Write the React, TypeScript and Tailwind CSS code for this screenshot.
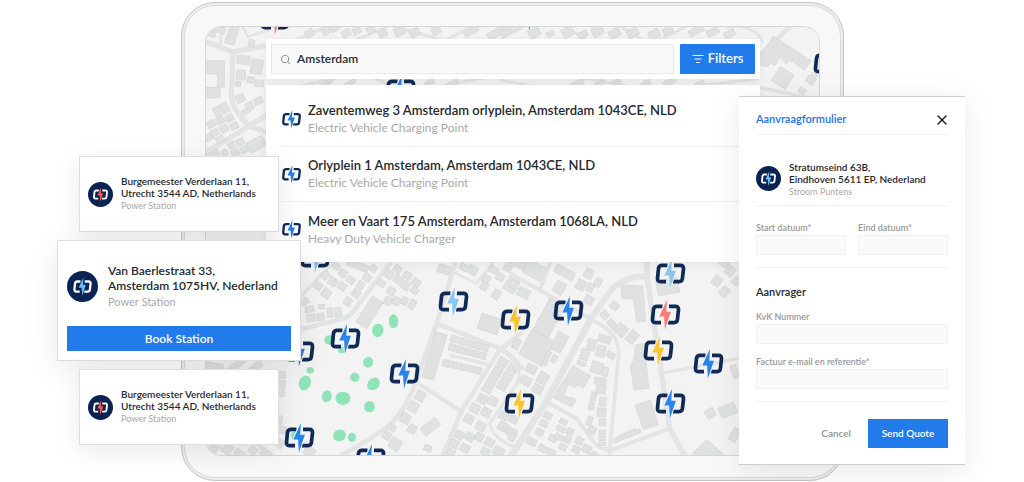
import { ListFilter, Search, X } from 'lucide-react';

const BLUE = '#2b84ea';
const SKY = '#8cc4ee';
const YELLOW = '#fac42f';
const RED = '#fa7a78';

type Block = [number, number, number, number, number];
type Road = [string, number];

interface Tile {
  transform: string;
  roads: Road[];
  blocks: Block[];
  shapes: string[];
}

// Blocks are [centre x, centre y, width, height, rotation].
const tiles: Tile[] = [
  {
    transform: 'translate(-35 -26) scale(0.3333)',
    roads: [
      ['M100 122 L190 155 L290 138', 16],
      ['M190 155 L186 290 Q188 330 240 378 L300 400', 16],
      ['M300 340 L240 378 L100 462', 16],
      ['M150 150 L160 70', 8],
      ['M215 70 L235 110 L300 90', 8],
      ['M380 120 L520 60 M560 120 L700 60 M640 70 L820 120 M830 120 L940 60', 9],
      ['M380 260 L520 230 M600 230 L700 270 M800 262 L960 230', 9],
    ],
    blocks: [
      [188, 105, 28, 58, 18], [150, 88, 34, 20, 20], [246, 130, 18, 22, 15], [128, 100, 20, 22, 15],
      [222, 180, 40, 26, 4], [262, 200, 34, 44, 10], [214, 225, 28, 30, 2], [244, 240, 22, 18, 5],
      [206, 252, 16, 14, 3], [270, 250, 26, 20, 5], [155, 330, 46, 30, -28], [180, 354, 24, 20, -28],
      [152, 362, 24, 20, -28], [125, 372, 24, 20, -28], [194, 378, 24, 20, -28], [164, 386, 24, 20, -28],
      [136, 398, 24, 20, -28], [118, 412, 24, 20, -28], [152, 418, 24, 20, -28], [212, 295, 26, 24, -28],
      [240, 318, 22, 24, -28], [266, 303, 26, 20, -28], [230, 334, 26, 14, -28], [262, 432, 52, 34, -28],
      [212, 426, 24, 20, -28], [186, 436, 20, 20, -28], [226, 448, 24, 20, -28], [198, 458, 24, 20, -28],
      [128, 466, 44, 20, -28], [166, 458, 18, 18, -28], [420, 100, 26, 22, -28], [470, 92, 26, 22, -28],
      [498, 84, 26, 18, -28], [530, 100, 26, 22, -28], [562, 92, 24, 20, -28], [604, 90, 24, 20, -28],
      [640, 100, 26, 22, -28], [690, 94, 30, 26, -28], [735, 98, 30, 24, -28], [800, 92, 26, 22, -28],
      [905, 94, 46, 18, -30], [985, 96, 66, 22, -30], [470, 250, 40, 12, -28], [540, 250, 40, 12, -28],
      [780, 248, 30, 14, -28], [850, 250, 34, 14, -28],
    ],
    shapes: ['107,182 165,182 165,262 152,262 152,292 107,296 107,262 144,262 144,222 107,222'],
  },
  {
    transform: 'translate(295 -26) scale(0.3333)',
    roads: [
      ['M778 170 L880 72', 14],
      ['M680 80 Q770 70 790 130', 9],
      ['M0 120 L110 60 M170 60 L260 120 M330 60 L430 120 M480 120 L600 60', 9],
      ['M0 240 L120 262 M200 262 L260 235 L400 262 M560 262 L780 236', 9],
      ['M778 262 L960 300', 10],
    ],
    blocks: [
      [32, 90, 60, 18, -28], [104, 98, 34, 28, -28], [152, 102, 22, 16, -28], [205, 96, 34, 28, -28],
      [250, 104, 30, 20, -28], [294, 94, 34, 28, -28], [345, 100, 34, 26, -28], [400, 98, 34, 26, -28],
      [464, 103, 34, 26, -28], [505, 92, 30, 20, -28], [590, 92, 46, 20, -28], [640, 96, 36, 20, -28],
      [690, 102, 34, 20, -28], [235, 252, 34, 20, -28], [300, 250, 30, 14, -28], [350, 246, 30, 14, -28],
      [440, 250, 26, 16, -28], [510, 246, 40, 16, -28], [600, 252, 30, 14, -28], [850, 234, 50, 50, 32],
      [934, 240, 26, 22, 32], [944, 226, 16, 14, 32], [908, 272, 20, 16, 32],
    ],
    shapes: ['822,108 935,182 915,210 872,180 860,192 854,184 840,170 828,196 812,190 806,200 780,196 780,168'],
  },
  {
    transform: 'translate(85 229) scale(0.3333)',
    roads: [
      ['M0 232 L165 190 Q182 184 192 168 L305 20', 14],
      ['M20 140 L135 18', 10],
      ['M500 18 L442 205 L375 390 Q335 500 250 545 L140 612', 14],
      ['M440 205 L630 280 Q670 300 700 345', 14],
      ['M700 230 L630 285 L515 470 L455 615', 14],
      ['M385 385 L515 468', 12],
      ['M480 300 L600 330', 10],
      ['M490 50 L560 85 L615 18', 8],
      ['M700 360 L600 505 Q610 555 690 582', 9],
    ],
    blocks: [
      [240, 172, 38, 92, 32], [600, 207, 62, 48, 18], [435, 303, 36, 142, 17], [494, 252, 20, 20, 15],
      [518, 259, 20, 20, 15], [541, 266, 20, 20, 15], [564, 272, 20, 20, 15], [587, 278, 20, 20, 15],
      [488, 277, 20, 20, 15], [511, 284, 20, 20, 15], [534, 290, 20, 20, 15], [557, 296, 20, 20, 15],
      [580, 302, 20, 20, 15], [470, 325, 20, 20, 15], [494, 330, 20, 20, 15], [518, 336, 20, 20, 15],
      [542, 341, 20, 20, 15], [566, 347, 20, 20, 15], [423, 515, 56, 28, -38], [415, 580, 22, 18, 20],
      [392, 423, 28, 30, 28], [372, 456, 28, 30, 28], [347, 490, 30, 28, 28], [368, 522, 24, 26, 30],
      [307, 518, 24, 20, 30], [292, 542, 24, 24, 30], [317, 567, 34, 34, 30], [97, 155, 18, 14, 0],
      [65, 189, 24, 22, -8], [93, 186, 22, 22, -8], [121, 173, 18, 28, -8], [146, 172, 20, 28, -10],
      [45, 140, 24, 20, -35], [60, 163, 26, 18, -10], [175, 140, 22, 24, 35], [200, 115, 24, 24, 35],
      [213, 90, 20, 22, 35], [233, 68, 24, 22, 35], [252, 40, 20, 20, 35], [85, 92, 26, 22, 35],
      [110, 115, 26, 26, 35], [108, 60, 24, 22, -35], [130, 80, 26, 24, 35], [158, 94, 24, 22, 35],
      [160, 55, 24, 22, 35], [184, 75, 24, 20, 35], [140, 34, 22, 18, 35], [205, 32, 66, 20, 20],
      [275, 85, 24, 20, 35], [295, 138, 22, 24, 25], [320, 138, 22, 24, 25], [345, 138, 18, 24, 25],
      [368, 148, 18, 30, 25], [305, 108, 24, 24, 35], [298, 58, 26, 24, 35], [324, 43, 24, 22, 35],
      [326, 74, 26, 24, 35], [348, 92, 24, 24, 35], [354, 62, 26, 22, 35], [380, 82, 24, 22, 35],
      [375, 106, 22, 20, 35], [454, 40, 18, 26, 20], [474, 46, 18, 26, 20], [522, 36, 24, 20, 30],
      [550, 46, 28, 26, 30], [590, 72, 22, 24, 30], [612, 45, 26, 20, 30], [632, 66, 24, 22, 30],
      [655, 38, 24, 22, 30], [584, 94, 22, 22, 30], [620, 118, 22, 28, 30], [666, 90, 36, 42, 30],
      [680, 266, 20, 30, 25], [640, 322, 28, 26, 28], [670, 340, 28, 26, 28], [624, 348, 28, 26, 28],
      [654, 366, 28, 26, 28], [609, 374, 28, 26, 28], [638, 392, 28, 26, 28], [594, 400, 28, 26, 28],
      [610, 438, 28, 26, 28], [578, 432, 28, 26, 28], [556, 460, 28, 26, 28], [590, 472, 28, 26, 28],
      [538, 492, 28, 26, 28], [574, 514, 28, 26, 28], [510, 540, 26, 24, 28], [541, 546, 26, 24, 28],
      [494, 566, 26, 24, 28], [526, 580, 26, 24, 28], [570, 546, 24, 24, 28], [484, 592, 24, 20, 28],
      [600, 562, 28, 24, 28], [588, 590, 26, 22, 28], [628, 590, 32, 26, 28], [640, 515, 28, 26, 28],
      [666, 532, 28, 24, 28], [642, 482, 26, 24, 28], [672, 492, 26, 24, 28], [60, 590, 30, 28, 35],
    ],
    shapes: [],
  },
  {
    transform: 'translate(305 229) scale(0.3333)',
    roads: [
      ['M0 55 L90 105 L125 18', 12],
      ['M90 105 L240 190', 12],
      ['M245 190 L110 440 L0 610', 20],
      ['M245 190 L300 112 Q340 62 412 64 L412 18', 18],
      ['M412 64 L455 350 L480 520 L530 610', 16],
      ['M455 355 L700 308', 10],
      ['M245 195 Q325 225 328 295 L300 590 L300 612', 11],
      ['M110 440 L200 490 L260 570 Q290 590 320 580 L480 520', 12],
      ['M0 320 Q45 335 20 385', 8],
    ],
    blocks: [
      [75, 46, 60, 44, 28], [42, 114, 36, 28, 28], [14, 90, 24, 24, 28], [165, 52, 62, 26, 28],
      [150, 98, 30, 36, 28], [214, 90, 26, 30, 28], [238, 56, 26, 28, 28], [242, 98, 20, 24, 28],
      [265, 82, 20, 26, 28], [238, 135, 26, 26, 28], [118, 190, 52, 108, 28], [82, 278, 78, 84, 28],
      [150, 262, 34, 56, 28], [116, 300, 14, 24, 28], [106, 322, 14, 20, 28], [134, 312, 14, 24, 28],
      [22, 268, 16, 28, 25], [65, 342, 30, 26, 28], [100, 370, 30, 34, 28], [50, 378, 30, 26, 28],
      [84, 402, 30, 26, 28], [285, 180, 24, 22, 45], [315, 152, 26, 22, 40], [308, 208, 20, 30, -40],
      [335, 225, 34, 34, 40], [368, 246, 28, 38, 40], [475, 95, 66, 44, -10], [622, 78, 26, 30, 35],
      [645, 110, 24, 30, 40], [662, 48, 26, 30, 40], [680, 78, 20, 24, 40], [645, 25, 26, 22, 35],
      [602, 475, 26, 28, 60], [655, 466, 50, 34, -22], [676, 350, 18, 40, -20], [676, 540, 24, 40, 30],
      [412, 480, 48, 78, -18], [285, 252, 38, 22, 18], [248, 260, 26, 14, 18], [244, 278, 26, 14, 18],
      [274, 288, 26, 34, 15], [228, 290, 26, 14, 18], [222, 308, 26, 14, 18], [216, 326, 26, 12, 18],
      [304, 300, 26, 18, 28], [262, 338, 34, 34, 18], [288, 350, 16, 28, 10], [272, 378, 34, 20, 5],
      [274, 404, 28, 26, 8], [252, 424, 16, 26, 10], [280, 440, 20, 26, 10], [246, 452, 16, 24, 10],
      [276, 472, 26, 26, 5], [240, 498, 16, 28, 20], [278, 502, 20, 22, 3], [278, 532, 20, 14, 0],
      [278, 550, 20, 14, 0], [278, 566, 20, 10, 0], [248, 525, 22, 22, 28], [115, 482, 24, 20, 28],
      [103, 506, 24, 20, 28], [90, 532, 24, 20, 28], [66, 560, 30, 20, 28], [98, 580, 24, 20, 28],
      [130, 550, 24, 20, 28], [124, 592, 26, 20, 28], [162, 500, 24, 16, 28], [154, 522, 26, 16, 28],
      [148, 546, 26, 16, 28], [182, 530, 20, 20, 28], [174, 554, 20, 20, 28], [160, 576, 24, 18, 28],
      [210, 558, 22, 22, 28], [200, 584, 22, 20, 28], [232, 582, 26, 22, 28], [256, 598, 20, 14, 28],
      [20, 20, 60, 26, 28], [8, 545, 20, 24, 28],
    ],
    shapes: [
      '190,332 243,362 222,400 205,390 195,398 178,388 162,420 172,424 180,428 192,428 200,436 188,456 130,428',
      '335,90 400,92 408,200 382,200 372,132 338,130',
      '378,270 404,265 418,400 374,406 362,330 372,320',
      '550,594 592,554 645,600 645,612 550,612',
      '310,552 375,520 382,525 390,520 396,532 316,564',
    ],
  },
  {
    transform: 'translate(-155 284) scale(0.3333)',
    roads: [['M465 380 L560 450 M620 400 L700 460', 12]],
    blocks: [
      [495, 172, 50, 26, 10], [560, 166, 60, 20, -40], [620, 170, 40, 20, -40], [694, 195, 26, 22, 0],
      [694, 222, 26, 22, 0], [692, 248, 26, 22, 0], [690, 330, 16, 26, 8], [700, 360, 20, 22, 8],
      [488, 420, 26, 26, 40], [535, 416, 26, 30, 40], [570, 430, 30, 22, 40], [610, 422, 24, 24, 40],
      [648, 430, 30, 24, 40], [690, 400, 26, 24, 40],
    ],
    shapes: [],
  },
];

// [centre x, centre y, radius x, radius y, rotation]
const trees: Block[] = [
  [265, 226, 17, 20, 15], [312, 199, 14, 21, 0], [236, 322, 15, 16, 20], [196, 367, 14, 14, 0],
  [252, 387, 21, 17, -45], [62, 346, 11, 10, 0], [46, 384, 18, 22, 20], [112, 424, 15, 18, 15],
  [160, 430, 22, 20, 0], [240, 455, 16, 17, 0], [150, 541, 20, 17, -20], [187, 547, 12, 14, 0],
  [120, 255, 16, 14, 0], [157, 285, 11, 10, 0], [16, 541, 12, 13, 0],
];

const pins: [number, number, string][] = [
  [71, -6, RED], [196, 64, BLUE], [325, -10, BLUE], [624, 38, BLUE], [111, 232, SKY],
  [249, 276, SKY], [141, 313, BLUE], [95, 326, BLUE], [200, 348, BLUE], [95, 412, BLUE],
  [166, 433, BLUE], [311, 294, YELLOW], [364, 285, BLUE], [466, 248, SKY], [461, 289, RED],
  [454, 325, YELLOW], [504, 338, BLUE], [466, 378, BLUE], [315, 378, YELLOW],
];

const stations = [
  { name: 'Zaventemweg 3 Amsterdam orlyplein, Amsterdam 1043CE, NLD', type: 'Electric Vehicle Charging Point' },
  { name: 'Orlyplein 1 Amsterdam, Amsterdam 1043CE, NLD', type: 'Electric Vehicle Charging Point' },
  { name: 'Meer en Vaart 175 Amsterdam, Amsterdam 1068LA, NLD', type: 'Heavy Duty Vehicle Charger' },
];

function Mark({ bolt, bracket = '#0f2a54', halo }: { bolt: string; bracket?: string; halo: string }) {
  return (
    <>
      <path
        d="M12 6.4H6.6Q3.5 6.4 3 9.4L2 19.3Q1.7 22.6 4.9 22.6H10.5M18.5 6.4H24.8Q28.3 6.4 28 9.8L26.9 19.6Q26.5 22.6 23.4 22.6H17.5"
        fill="none"
        stroke={bracket}
        strokeWidth="3.7"
      />
      <path
        d="M16.4 0L8.8 16.4H13.6L14.4 29.4L20.4 11.8H15.8Z"
        fill={bolt}
        stroke={halo}
        strokeWidth="2"
        paintOrder="stroke"
      />
    </>
  );
}

function RoundMark({ bolt, className }: { bolt: string; className: string }) {
  return (
    <svg viewBox="0 0 50 50" className={`shrink-0 ${className}`} aria-hidden="true">
      <circle cx="25" cy="25" r="25" fill="#0a2353" />
      <g transform="translate(10 10.5)">
        <Mark bolt={bolt} bracket="#ffffff" halo="#0a2353" />
      </g>
    </svg>
  );
}

function CityMap() {
  return (
    <svg
      viewBox="1 1 614 428"
      preserveAspectRatio="xMidYMid slice"
      className="absolute inset-0 h-full w-full"
      aria-hidden="true"
    >
      <rect width="616" height="430" fill="#f3f3f3" />
      {tiles.map((tile) => (
        <g key={tile.transform} transform={tile.transform}>
          {tile.roads.map(([d, width]) => (
            <path key={d} d={d} fill="none" stroke="#e3e4e4" strokeWidth={width} strokeLinejoin="round" />
          ))}
          <g fill="#e0e1e1" stroke="#cfd0d0" strokeWidth="1.5">
            {tile.blocks.map(([x, y, w, h, r], i) => (
              <rect key={i} x={x - w / 2} y={y - h / 2} width={w} height={h} transform={`rotate(${r} ${x} ${y})`} />
            ))}
            {tile.shapes.map((points) => (
              <polygon key={points} points={points} />
            ))}
          </g>
        </g>
      ))}
      <g transform="translate(85 229) scale(0.3333)" fill="#8fe3b8">
        {trees.map(([x, y, rx, ry, r], i) => (
          <ellipse key={i} cx={x} cy={y} rx={rx} ry={ry} transform={`rotate(${r} ${x} ${y})`} />
        ))}
      </g>
      {pins.map(([x, y, color]) => (
        <g key={`${x}-${y}`} transform={`translate(${x - 15} ${y - 15})`}>
          <Mark bolt={color} halo="#f3f3f3" />
        </g>
      ))}
    </svg>
  );
}

function SmallCard() {
  return (
    <article className="flex h-[76px] w-[200px] items-center gap-2 border border-[#dedede] bg-white px-2 shadow-[0_6px_24px_rgba(0,0,0,0.09)]">
      <RoundMark bolt="#fb5a55" className="size-[25px]" />
      <div className="whitespace-nowrap">
        <h3 className="text-[10px] leading-3 font-semibold text-[#26282c]">
          Burgemeester Verderlaan 11,
          <br />
          Utrecht 3544 AD, Netherlands
        </h3>
        <p className="text-[9px] leading-[14px] text-[#a9a9a9]">Power Station</p>
      </div>
    </article>
  );
}

function BookingCard() {
  return (
    <article className="w-full border border-[#dedede] bg-white px-[9px] pt-[22px] pb-[9px] shadow-[0_8px_30px_rgba(0,0,0,0.09)]">
      <div className="flex items-center gap-[10px]">
        <RoundMark bolt="#69bdf7" className="size-[31px]" />
        <div className="whitespace-nowrap">
          <h3 className="text-xs leading-[15px] font-semibold text-[#26282c]">
            Van Baerlestraat 33,
            <br />
            Amsterdam 1075HV, Nederland
          </h3>
          <p className="text-[11px] leading-[17px] text-[#a9a9a9]">Power Station</p>
        </div>
      </div>
      <button type="button" className="mt-4 h-[25px] w-full bg-[#217bea] text-xs font-semibold text-white">
        Book Station
      </button>
    </article>
  );
}

function Field({ id, label }: { id: string; label: string }) {
  return (
    <div className="min-w-0 flex-1">
      <label htmlFor={id} className="block pb-px text-[9px] leading-3 font-semibold text-[#989898]">
        {label}
      </label>
      <input id={id} type="text" className="block h-5 w-full border border-[#f1f1f1] bg-[#fafafa] px-1 text-[9px]" />
    </div>
  );
}

function QuoteForm() {
  return (
    <form className="absolute top-24 right-[59px] w-[226px] border-y border-[#cdcdcd] bg-white px-[17px] pb-4 shadow-[0_6px_30px_rgba(0,0,0,0.09)]">
      <div className="flex h-[38px] items-center justify-between border-b border-[#f0f0f0] pt-2">
        <h2 className="text-[11px] font-semibold text-[#1a73e8]">Aanvraagformulier</h2>
        <button type="button" aria-label="Sluiten" className="text-[#1d1d1d]">
          <X size={16} className="-mr-0.5" strokeWidth={2} />
        </button>
      </div>
      <div className="flex h-[71px] items-end gap-2 border-b border-[#f0f0f0] pb-[6px]">
        <RoundMark bolt="#69bdf7" className="mb-2 size-[25px]" />
        <div className="whitespace-nowrap">
          <h3 className="text-[10px] leading-3 font-semibold text-[#26282c]">
            Stratumseind 63B,
            <br />
            Eindhoven 5611 EP, Nederland
          </h3>
          <p className="text-[9px] leading-[14px] text-[#a9a9a9]">Stroom Puntens</p>
        </div>
      </div>
      <div className="flex gap-3 border-b border-[#f0f0f0] pt-4 pb-3">
        <Field id="start" label="Start datuum*" />
        <Field id="end" label="Eind datuum*" />
      </div>
      <h3 className="pt-4 pb-[11px] text-[11px] leading-4 font-semibold text-[#26282c]">Aanvrager</h3>
      <Field id="kvk" label="KvK Nummer" />
      <div className="border-b border-[#f0f0f0] pt-3 pb-3">
        <Field id="invoice" label="Factuur e-mail en referentie*" />
      </div>
      <div className="flex items-center justify-end gap-[17px] pt-[17px]">
        <button type="button" className="text-[10px] font-semibold text-[#929292]">
          Cancel
        </button>
        <button type="submit" className="h-[29px] w-20 bg-[#217bea] text-[10px] font-semibold text-white">
          Send Quote
        </button>
      </div>
    </form>
  );
}

function SearchBar() {
  return (
    <div className="flex gap-[6px] bg-white p-[5px] shadow-[0_2px_8px_rgba(0,0,0,0.06)]">
      <label className="flex min-w-0 flex-1 items-center gap-[6px] border border-[#e8e8e8] bg-[#fafafa] px-2">
        <Search size={11} className="shrink-0 text-[#8a8a8a]" />
        <input
          type="text"
          aria-label="Search"
          defaultValue="Amsterdam"
          className="w-full min-w-0 bg-transparent text-xs font-semibold text-[#26282c] outline-none"
        />
      </label>
      <button
        type="button"
        className="flex h-[30px] w-[75px] items-center justify-center gap-1 rounded-[1px] bg-[#217bea] text-[13px] font-semibold text-white"
      >
        <ListFilter size={12} />
        Filters
      </button>
    </div>
  );
}

function StationList() {
  return (
    <ul className="mt-[6px] bg-white pt-[7px] pb-[5px] pl-4 shadow-[0_2px_10px_rgba(0,0,0,0.08)]">
      {stations.map(({ name, type }) => (
        <li
          key={name}
          className="flex h-[55px] items-center gap-[7px] border-b border-[#efefef] whitespace-nowrap last:border-b-0"
        >
          <svg viewBox="0 0 30 30" className="size-[19px] shrink-0" aria-hidden="true">
            <Mark bolt="#217bea" halo="#ffffff" />
          </svg>
          <div>
            <h3 className="text-[13px] leading-[18px] font-semibold text-[#26282c]">{name}</h3>
            <p className="text-xs leading-[18px] text-[#a9a9a9]">{type}</p>
          </div>
        </li>
      ))}
    </ul>
  );
}

export default function App() {
  return (
    <main className="relative overflow-hidden bg-white pt-[2px] pr-[180px] pb-[2px] pl-[181px] font-[Lato,sans-serif]">
      <div className="rounded-[34px] border border-[#c6c6c6] bg-[#ececec] p-[2px]">
        <div className="rounded-[31px] border border-[#dadada] bg-[#f8f8f8] px-5 pt-5 pb-[21px]">
          <div className="relative min-h-[430px] overflow-hidden rounded-2xl border border-[#d6d6d6] pt-3 pr-[59px] pl-[60px]">
            <CityMap />
            <div className="relative">
              <SearchBar />
              <StationList />
            </div>
          </div>
        </div>
      </div>
      <section className="absolute top-[156px] left-[57px] flex w-[244px] flex-col items-center gap-2">
        <SmallCard />
        <BookingCard />
        <SmallCard />
      </section>
      <QuoteForm />
    </main>
  );
}
